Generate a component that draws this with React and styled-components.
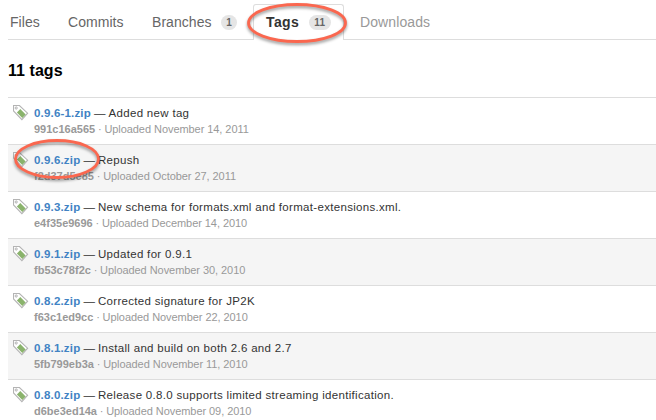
import React from "react";
import styled, { createGlobalStyle } from "styled-components";

const GlobalStyle = createGlobalStyle`
  * { box-sizing: border-box; }
  html, body { margin: 0; padding: 0; background: #fff; overflow: hidden; }
  body { font-family: "Liberation Sans", Arial, sans-serif; }
`;

const Page = styled.main`
  width: 656px;
  height: 420px;
  padding-left: 8px;
  overflow: hidden;
`;

const TabBar = styled.nav`
  display: flex;
  height: 40px;
  padding-top: 4px;
  border-bottom: 1px solid #ddd;
`;

const Tab = styled.a`
  display: flex;
  align-items: center;
  width: ${(p) => p.$width}px;
  height: ${(p) => (p.$active ? 36 : 35)}px;
  padding: ${(p) => (p.$active ? "0 0 1px 12px" : "1px 0 0 2px")};
  margin-right: ${(p) => (p.$active ? 14 : 0)}px;
  border: ${(p) => (p.$active ? "1px solid #ddd" : "0")};
  border-bottom: 0;
  border-radius: 3px 3px 0 0;
  background: #fff;
  color: ${(p) => (p.$active ? "#333" : p.$muted ? "#999" : "#666")};
  font-size: 14px;
  font-weight: ${(p) => (p.$active ? 700 : 400)};
  letter-spacing: ${(p) => (p.$active ? 0.4 : p.$muted ? 0.1 : 0.05)}px;
  white-space: nowrap;
`;

const Badge = styled.span`
  display: flex;
  align-items: center;
  justify-content: center;
  width: ${(p) => p.$width}px;
  height: 15px;
  margin-left: ${(p) => p.$gap}px;
  border-radius: 8px;
  background: #e5e5e5;
  color: #666;
  font-size: 10px;
  font-weight: 700;
  letter-spacing: 0.2px;
`;

const Heading = styled.h1`
  height: 57px;
  margin: 0;
  padding-top: 21px;
  color: #000;
  font-size: 16px;
  line-height: 20px;
  letter-spacing: 0.05px;
`;

const TagList = styled.ul`
  margin: 0;
  padding: 0;
  list-style: none;
`;

const TagRow = styled.li`
  display: flex;
  height: 47px;
  padding: 7px 0 0 5px;
  border-top: 1px solid #ddd;
  background: ${(p) => (p.$shaded ? "#f5f5f5" : "#fff")};
`;

const TagIcon = styled.svg`
  flex: none;
  width: 16px;
  height: 16px;
  margin-right: 5px;
`;

const Title = styled.div`
  height: 16px;
  color: #333;
  font-size: 11.5px;
  line-height: 17px;
  letter-spacing: 0.31px;
  white-space: pre;
`;

const ZipLink = styled.a`
  color: #4183c4;
  font-weight: 700;
  letter-spacing: 0.18px;
`;

const Dash = styled.span`
  letter-spacing: -0.1px;
`;

const Meta = styled.div`
  color: #999;
  font-size: 11px;
  line-height: 16px;
  letter-spacing: -0.06px;
  white-space: pre;
`;

const Hash = styled.b`
  letter-spacing: 0;
`;

const Separator = styled.span`
  letter-spacing: -0.2px;
`;

const Highlight = styled.svg`
  position: absolute;
  left: ${(p) => p.$x}px;
  top: ${(p) => p.$y}px;
  overflow: visible;
  filter: drop-shadow(0 2px 1.5px rgba(0, 0, 0, 0.4));
  pointer-events: none;
`;

const tags = [
  ["0.9.6-1.zip", "Added new tag", "991c16a565", "November 14, 2011"],
  ["0.9.6.zip", "Repush", "f2d37d5e85", "October 27, 2011"],
  ["0.9.3.zip", "New schema for formats.xml and format-extensions.xml.", "e4f35e9696", "December 14, 2010"],
  ["0.9.1.zip", "Updated for 0.9.1", "fb53c78f2c", "November 30, 2010"],
  ["0.8.2.zip", "Corrected signature for JP2K", "f63c1ed9cc", "November 22, 2010"],
  ["0.8.1.zip", "Install and build on both 2.6 and 2.7", "5fb799eb3a", "November 11, 2010"],
  ["0.8.0.zip", "Release 0.8.0 supports limited streaming identification.", "d6be3ed14a", "November 09, 2010"],
];

function LabelIcon() {
  return (
    <TagIcon viewBox="0 0 16 16" fill="none">
      <path d="M.5.5h5.9l8.2 7.7-5.7 6.4L.5 6z" fill="#fff" stroke="#b4b4b4" strokeWidth="1.1" />
      <circle cx="3.2" cy="3" r="1.1" stroke="#aaa" strokeWidth=".9" />
      <path d="M7.3 4.1l5.4 5.4-3.4 3.4-5.4-5.4z" fill="#8ab36c" />
    </TagIcon>
  );
}

function Ring({ x, y, width, height }) {
  return (
    <Highlight $x={x} $y={y} width={width} height={height}>
      <ellipse
        cx={width / 2}
        cy={height / 2}
        rx={width / 2 - 1.5}
        ry={height / 2 - 1.5}
        fill="none"
        stroke="#fa674f"
        strokeWidth="2.8"
      />
    </Highlight>
  );
}

export default function App() {
  return (
    <Page>
      <GlobalStyle />
      <TabBar>
        <Tab $width={58}>Files</Tab>
        <Tab $width={84}>Commits</Tab>
        <Tab $width={103}>Branches<Badge $width={16} $gap={9.5}>1</Badge></Tab>
        <Tab $width={91} $active>Tags<Badge $width={22} $gap={9.5}>11</Badge></Tab>
        <Tab $width={100} $muted>Downloads</Tab>
      </TabBar>
      <Heading>11 tags</Heading>
      <TagList>
        {tags.map(([file, note, hash, date], i) => (
          <TagRow key={file} $shaded={i % 2 === 1}>
            <LabelIcon />
            <div>
              <Title><ZipLink>{file}</ZipLink><Dash> — </Dash>{note}</Title>
              <Meta><Hash>{hash}</Hash><Separator> · </Separator>Uploaded {date}</Meta>
            </div>
          </TagRow>
        ))}
      </TagList>
      <Ring x={247} y={3} width={100} height={40} />
      <Ring x={14} y={139} width={86} height={40} />
    </Page>
  );
}
